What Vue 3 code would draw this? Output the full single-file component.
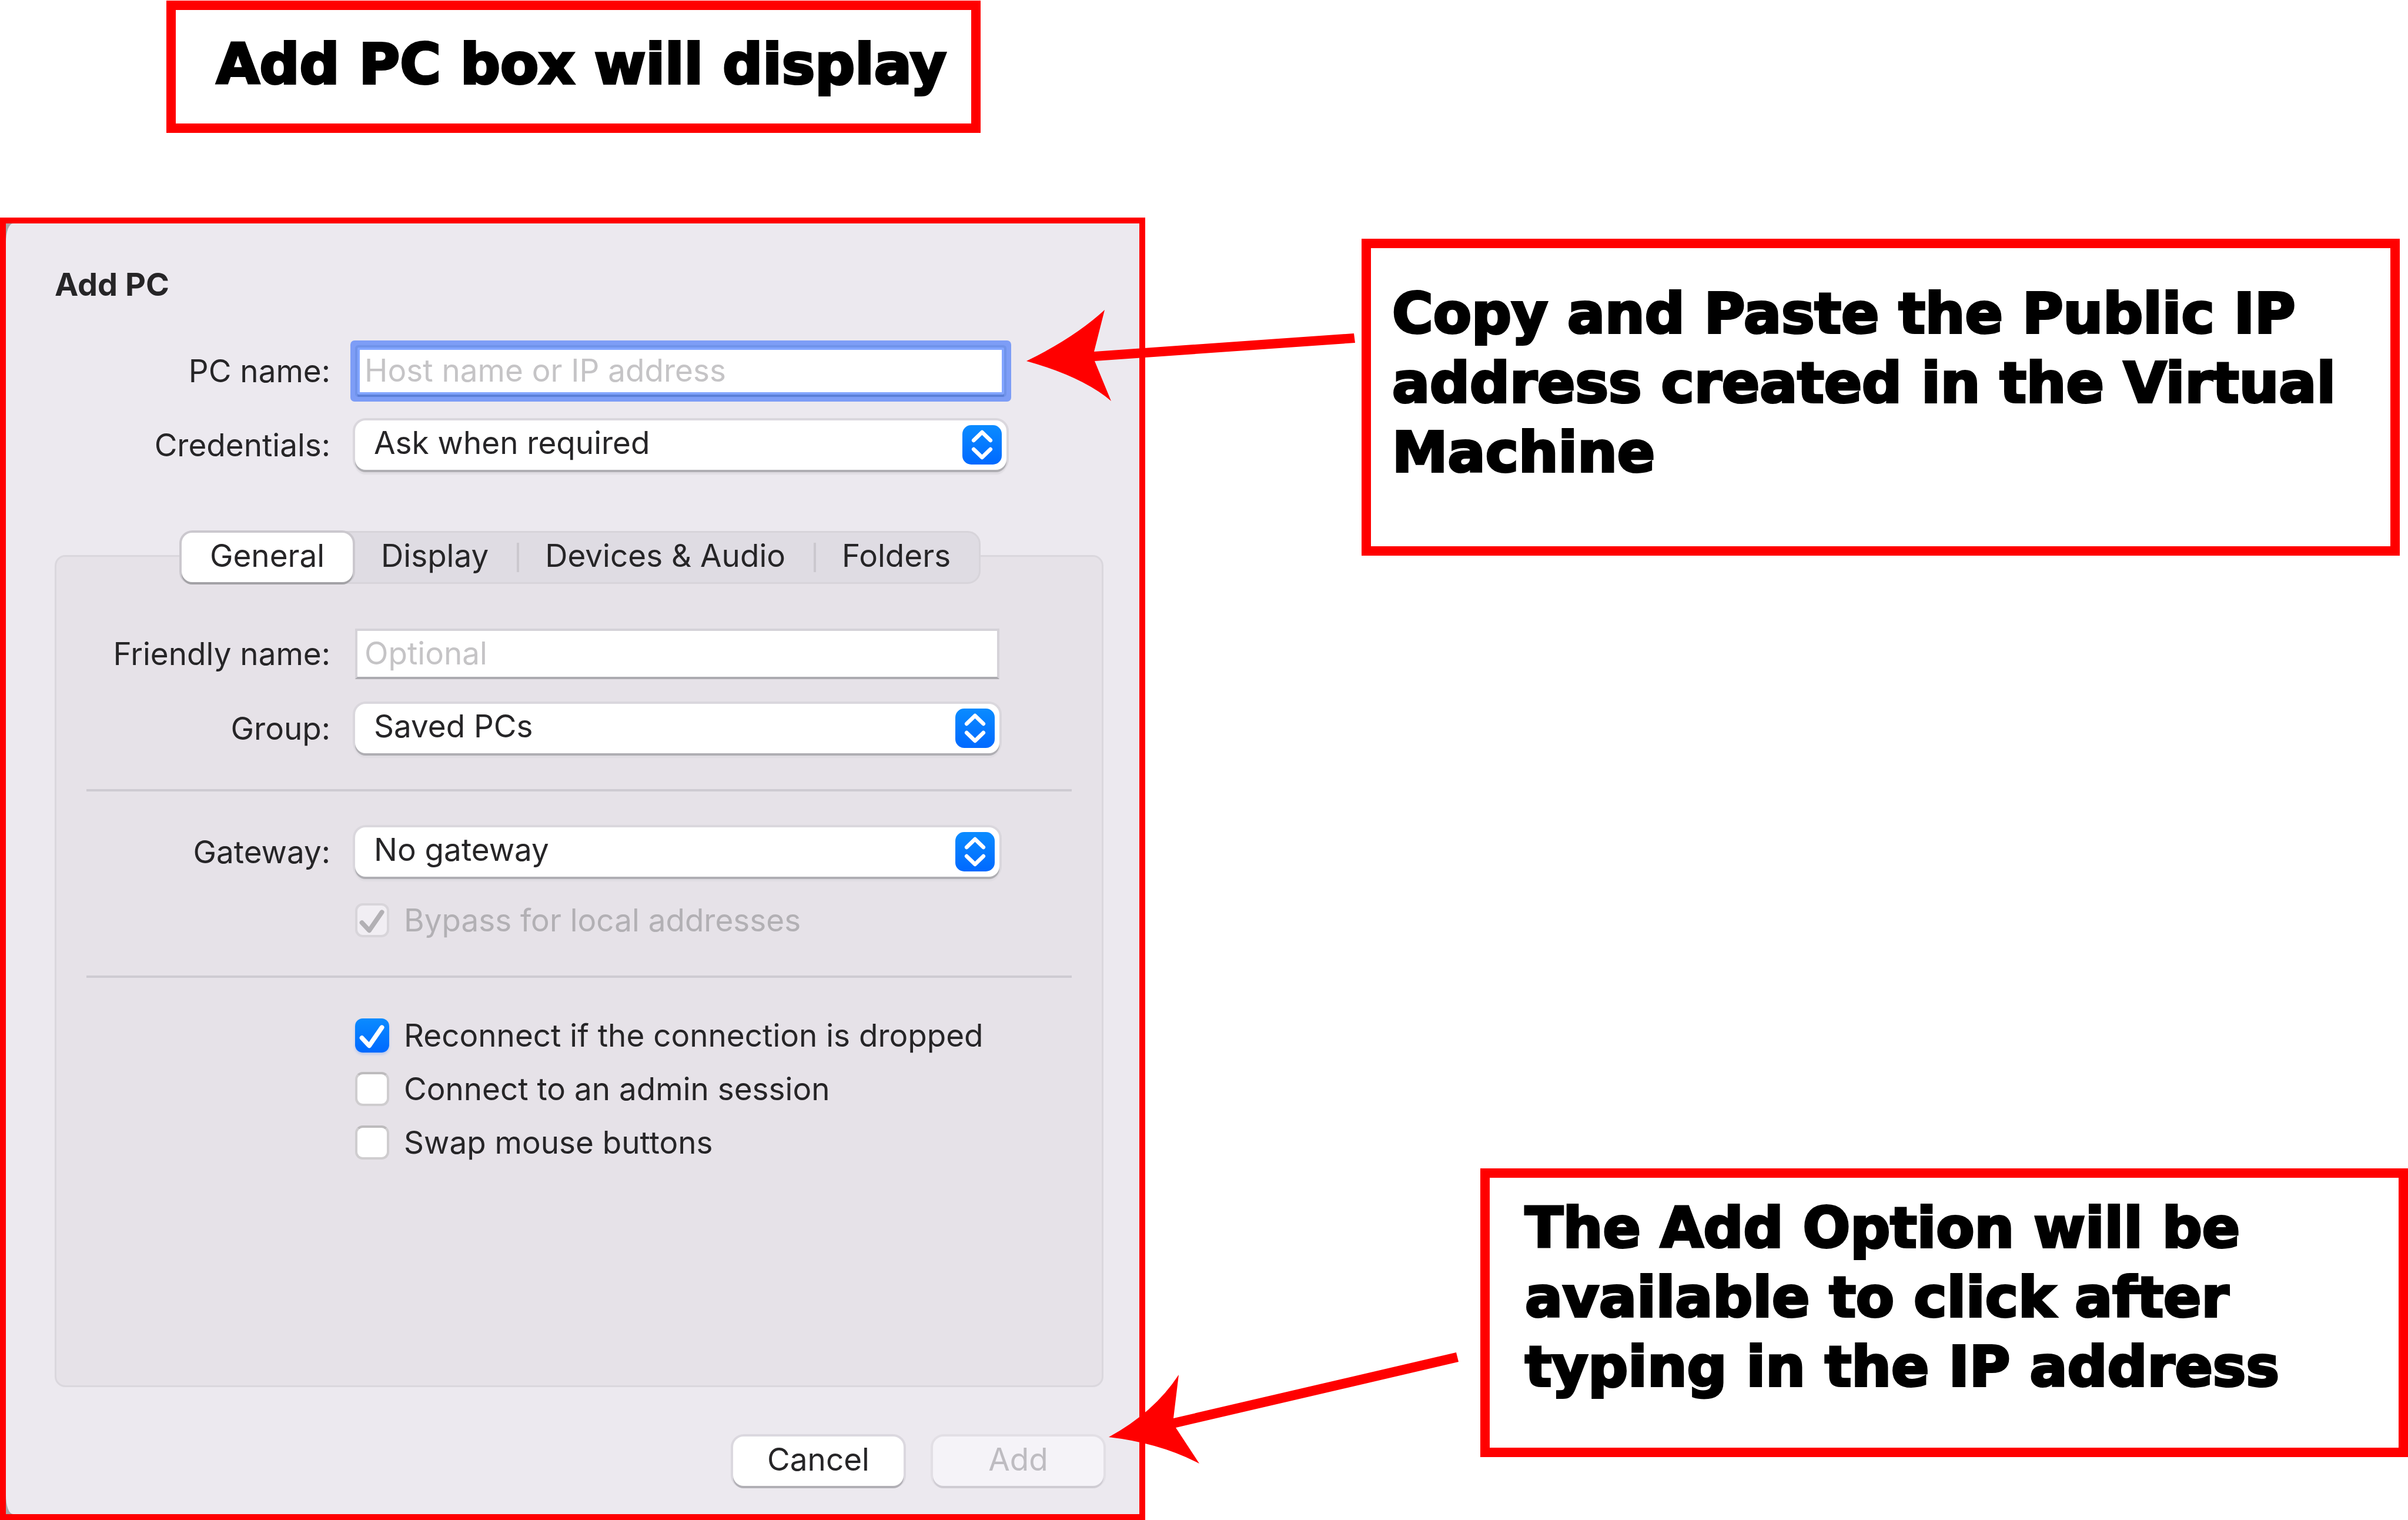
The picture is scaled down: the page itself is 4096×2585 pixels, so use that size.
<script setup>
import { ref } from 'vue'

const tabs = ['General', 'Display', 'Devices & Audio', 'Folders']
const activeTab = ref('General')

const pcName = ref('')
const friendlyName = ref('')
const credentials = ref('Ask when required')
const group = ref('Saved PCs')
const gateway = ref('No gateway')
const bypass = ref(true)

const options = ref([
  { id: 'reconnect', label: 'Reconnect if the connection is dropped', checked: true },
  { id: 'admin', label: 'Connect to an admin session', checked: false },
  { id: 'swap', label: 'Swap mouse buttons', checked: false },
])
</script>

<template>
  <main class="page">
    <div class="left">
      <p class="callout title-callout">Add PC box will display</p>

      <section class="dialog" aria-labelledby="dialog-title">
        <form class="dialog-body" @submit.prevent>
          <h1 id="dialog-title">Add PC</h1>

          <div class="fields head-fields">
            <label for="pc-name">PC name:</label>
            <input id="pc-name" v-model="pcName" class="text focused" type="text" placeholder="Host name or IP address" />
            <label for="credentials">Credentials:</label>
            <div class="select">
              <select id="credentials" v-model="credentials">
                <option>Ask when required</option>
              </select>
              <svg viewBox="0 0 16 16" aria-hidden="true"><path d="M4.6 6.2 8 2.9 11.4 6.2M4.6 9.8 8 13.1 11.4 9.8" /></svg>
            </div>
          </div>

          <div class="tabs" role="tablist">
            <button
              v-for="t in tabs"
              :key="t"
              type="button"
              role="tab"
              :aria-selected="t === activeTab"
              :class="{ active: t === activeTab }"
              @click="activeTab = t"
            >{{ t }}</button>
          </div>

          <div class="panel" role="tabpanel">
            <div class="fields">
              <label for="friendly">Friendly name:</label>
              <input id="friendly" v-model="friendlyName" class="text" type="text" placeholder="Optional" />
              <label for="group">Group:</label>
              <div class="select">
                <select id="group" v-model="group">
                  <option>Saved PCs</option>
                </select>
                <svg viewBox="0 0 16 16" aria-hidden="true"><path d="M4.6 6.2 8 2.9 11.4 6.2M4.6 9.8 8 13.1 11.4 9.8" /></svg>
              </div>
            </div>

            <hr />

            <div class="fields gateway-fields">
              <label for="gateway">Gateway:</label>
              <div class="select">
                <select id="gateway" v-model="gateway">
                  <option>No gateway</option>
                </select>
                <svg viewBox="0 0 16 16" aria-hidden="true"><path d="M4.6 6.2 8 2.9 11.4 6.2M4.6 9.8 8 13.1 11.4 9.8" /></svg>
              </div>
              <label class="check disabled" for="bypass">
                <span class="box">
                  <input id="bypass" v-model="bypass" type="checkbox" disabled />
                  <svg viewBox="0 0 14 14" aria-hidden="true"><path d="M2.8 8 5.8 11.2 11 3.7" /></svg>
                </span>
                Bypass for local addresses
              </label>
            </div>

            <hr />

            <div class="fields checks">
              <label v-for="o in options" :key="o.id" class="check" :for="o.id">
                <span class="box">
                  <input :id="o.id" v-model="o.checked" type="checkbox" />
                  <svg v-if="o.checked" viewBox="0 0 14 14" aria-hidden="true"><path d="M2.8 8 5.8 11.2 11 3.7" /></svg>
                </span>
                {{ o.label }}
              </label>
            </div>
          </div>

          <div class="actions">
            <button type="button">Cancel</button>
            <button type="submit" disabled>Add</button>
          </div>
        </form>
      </section>
    </div>

    <div class="right">
      <p class="callout ip-callout">Copy and Paste the Public IP<br />address created in the Virtual<br />Machine</p>
      <p class="callout add-callout">The Add Option will be<br />available to click after<br />typing in the IP address</p>
    </div>

    <svg class="arrows" viewBox="0 0 4096 2585" aria-hidden="true">
      <path d="M1746 614Q1828 574 1879 527L1861 598 2303 567 2305 583 1862 614 1890 682Q1842 641 1746 614Z" />
      <path d="M1886 2444Q1963 2402 2005 2338L1996 2412 2477 2300 2481 2316 2000 2428 2040 2489Q1973 2454 1886 2444Z" />
    </svg>
  </main>
</template>

<style>
body {
  margin: 0;
  background: #fff;
}
</style>

<style scoped>
.page {
  position: relative;
  display: grid;
  grid-template-columns: 1948fr 2148fr;
  min-height: 100vh;
  box-sizing: border-box;
  font-family: Inter, "Liberation Sans", sans-serif;
  font-size: 53px;
  line-height: 64px;
  color: #262527;
}

.page * {
  box-sizing: border-box;
}

.left,
.right {
  display: flex;
  flex-direction: column;
}

.left {
  padding-top: 1px;
}

.right {
  justify-content: space-between;
  padding: 406px 0 107px;
}

.callout {
  margin: 0;
  border: 16px solid #f00;
  background: #fff;
  color: #000;
  font-family: "DejaVu Sans", sans-serif;
  font-weight: 700;
  font-size: 95px;
  line-height: 118px;
  -webkit-text-stroke: 4px #000;
}

.title-callout {
  align-self: flex-start;
  margin: 0 0 144px 283px;
  padding: 33px 42px 42px 69px;
}

.ip-callout {
  margin: 0 14px 0 368px;
  padding: 52px 0 101px 36px;
}

.add-callout {
  margin-left: 570px;
  padding: 26px 0 79px 60px;
}

.dialog {
  flex: 1;
  display: flex;
  border: 10px solid #f00;
  background: #a9a9ab;
}

.dialog-body {
  flex: 1;
  display: flex;
  flex-direction: column;
  padding: 72px 61px 48px 83px;
  border-radius: 12px 0 0 12px / 32px 0 0 32px;
  background: #ece9ef;
}

h1 {
  margin: 0 0 75px;
  font-size: 54px;
  line-height: 64px;
  font-weight: 700;
}

.fields {
  display: grid;
  grid-template-columns: 415px 1fr;
  column-gap: 42px;
  row-gap: 42px;
  align-items: center;
  padding-right: 123px;
}

.head-fields {
  grid-template-columns: 469px 1fr;
  row-gap: 44px;
  padding-right: 165px;
}

.gateway-fields {
  row-gap: 45px;
  padding-bottom: 4px;
}

.fields > label:not(.check) {
  text-align: right;
}

.text {
  width: 100%;
  height: 86px;
  padding: 0 12px 2px;
  border: 4px solid #d5d2d8;
  border-bottom-color: #acabb0;
  border-radius: 0;
  outline: 0;
  background: #fff;
  font: inherit;
  color: inherit;
}

.text::placeholder {
  color: #c5c4c6;
  opacity: 1;
}

.text.focused {
  width: auto;
  height: 80px;
  margin: 0 4px;
  padding: 0 8px 2px;
  border-color: #82a5ff;
  border-radius: 2px;
  box-shadow: 0 4px 0 #5c80d8, 0 0 0 4px #7093ea, 0 0 0 12px #7d9df6;
}

.select {
  position: relative;
  height: 84px;
}

.select select {
  width: 100%;
  height: 100%;
  padding: 0 100px 8px 32px;
  border: 0;
  border-radius: 18px;
  outline: 0;
  appearance: none;
  background: #fff;
  box-shadow: 0 4px 0 #afaeb3, 0 0 0 4px #dad7dd, 0 8px 2px #dfdce2;
  font: inherit;
  color: inherit;
}

.select svg {
  position: absolute;
  top: 8px;
  right: 8px;
  width: 67px;
  height: 67px;
  border-radius: 15px;
  background: linear-gradient(#0a8bff, #0069ff);
  pointer-events: none;
}

.select path {
  fill: none;
  stroke: #fff;
  stroke-width: 1.6;
  stroke-linecap: round;
  stroke-linejoin: round;
}

.tabs {
  z-index: 1;
  align-self: center;
  display: flex;
  height: 90px;
  margin: 104px 0 -49px 4px;
  border: 3px solid #d7d4da;
  border-radius: 22px;
  background: #dfdce3;
}

.tabs button {
  position: relative;
  height: 84px;
  padding: 0 48px 6px;
  border: 0;
  border-radius: 18px;
  background: none;
  font: inherit;
  color: inherit;
}

.tabs button.active {
  background: #fff;
  box-shadow: 0 4px 0 #a3a2a6, 0 0 0 4px #cbc8ce;
}

.tabs button:not(.active) + button::before {
  content: "";
  position: absolute;
  left: 0;
  top: 17px;
  width: 4px;
  height: 50px;
  background: #cbc8ce;
}

.panel {
  flex: 1;
  padding: 122px 51px 0;
  border: 3px solid #dad7dd;
  border-radius: 18px;
  background: #e6e2e8;
}

hr {
  height: 4px;
  margin: 61px 0;
  border: 0;
  background: #cecbd2;
}

.check {
  grid-column: 2;
  display: flex;
  align-items: center;
  gap: 25px;
  height: 58px;
  white-space: nowrap;
}

.checks {
  row-gap: 33px;
  padding-top: 8px;
}

.box {
  position: relative;
  width: 58px;
  height: 58px;
}

.box input {
  display: block;
  width: 58px;
  height: 58px;
  margin: 0;
  border: 4px solid #cfcdcf;
  border-top-color: #bdbbbd;
  border-radius: 13px;
  appearance: none;
  background: #fff;
}

.box input:checked {
  border: 0;
  background: linear-gradient(#0a8bff, #0069ff);
  box-shadow: 0 3px 4px #b4c6ef;
}

.box input:disabled {
  border: 4px solid #d8d5da;
  background: #f1eef3;
  box-shadow: none;
}

.box svg {
  position: absolute;
  inset: 0;
  pointer-events: none;
}

.box path {
  fill: none;
  stroke: #fff;
  stroke-width: 1.9;
  stroke-linecap: round;
  stroke-linejoin: round;
}

.disabled {
  color: #b2b0b4;
}

.disabled path {
  stroke: #b2b0b4;
}

.actions {
  display: flex;
  justify-content: flex-end;
  gap: 50px;
  margin-top: 84px;
}

.actions button {
  width: 290px;
  height: 84px;
  padding: 0 0 6px;
  border: 0;
  border-radius: 18px;
  background: #fff;
  box-shadow: 0 4px 0 #b1afb5, 0 0 0 4px #dbd8df;
  font: inherit;
  color: inherit;
}

.actions button:disabled {
  background: #f5f3f8;
  box-shadow: 0 4px 0 #cfccd3, 0 0 0 4px #e2dfe5;
  color: #bebcc1;
}

.arrows {
  position: absolute;
  top: 0;
  left: 0;
  width: 100%;
  fill: #f00;
  pointer-events: none;
}
</style>
